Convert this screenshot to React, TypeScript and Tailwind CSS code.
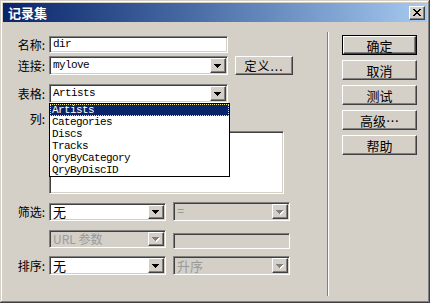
import React from "react";

const cjk = "font-['Noto_Sans_CJK_SC',sans-serif]";
const mono = "font-['Liberation_Mono',monospace]";
const sunken =
  "border border-t-[#808080] border-l-[#808080] border-b-white border-r-white shadow-[inset_1px_1px_0_#404040,inset_-1px_-1px_0_#d4d0c8]";
const raised =
  "border border-t-white border-l-white border-r-[#404040] border-b-[#404040] shadow-[inset_-1px_-1px_0_#808080,inset_1px_1px_0_#d4d0c8]";

function Arrow({ disabled }: { disabled?: boolean }) {
  const d = "M0 0h7v1H0zM1 1h5v1H1zM2 2h3v1H2zM3 3h1v1H3z";
  return (
    <svg width="8" height="5" viewBox="0 0 8 5">
      {disabled && <path d={d} fill="#ffffff" transform="translate(1 1)" />}
      <path d={d} fill={disabled ? "#808080" : "#000000"} />
    </svg>
  );
}

function Select({
  value,
  w,
  h,
  disabled,
  textCls,
  children,
}: {
  value: string;
  w: string;
  h: string;
  disabled?: boolean;
  textCls: string;
  children?: React.ReactNode;
}) {
  return (
    <div className={`relative ${w} ${h} shrink-0`}>
      <div
        className={`flex h-full w-full items-stretch p-[1px] ${sunken} ${
          disabled ? "bg-[#d4d0c8]" : "bg-white"
        }`}
      >
        <div
          className={`flex flex-1 items-center pl-[2px] leading-none ${textCls} ${
            disabled ? "text-[#9a9a9a]" : "text-black"
          }`}
        >
          {value}
        </div>
        <div
          className={`flex w-[16px] items-center justify-center bg-[#d4d0c8] pt-[1px] ${raised}`}
        >
          <Arrow disabled={disabled} />
        </div>
      </div>
      {children}
    </div>
  );
}

function Label({ text, cls = "" }: { text: string; cls?: string }) {
  return (
    <div
      className={`w-[43px] shrink-0 pr-[1px] text-right text-[12px] leading-none text-black ${cjk} ${cls}`}
    >
      {text}
    </div>
  );
}

function Btn({ text, def }: { text: string; def?: boolean }) {
  const inner = (
    <div
      className={`flex h-full w-full items-center justify-center bg-[#d4d0c8] text-[13px] leading-none text-black ${cjk} ${raised}`}
    >
      {text}
    </div>
  );
  return (
    <div
      className={`h-[20px] w-[75px] ${def ? "border border-black" : ""}`}
    >
      {inner}
    </div>
  );
}

const items = [
  "Artists",
  "Categories",
  "Discs",
  "Tracks",
  "QryByCategory",
  "QryByDiscID",
];

export default function App() {
  return (
    <div className="h-[306px] w-[432px] bg-white">
      <div className="flex h-[303px] w-[430px] flex-col bg-[#d4d0c8] p-[3px] shadow-[inset_-1px_-1px_0_#404040,inset_1px_1px_0_#d4d0c8,inset_-2px_-2px_0_#808080,inset_2px_2px_0_#ffffff]">
        {/* Title bar */}
        <div className="flex h-[19px] shrink-0 items-center justify-between bg-gradient-to-r from-[#0a246a] to-[#a6caf0] pl-[5px] pr-[2px]">
          <span
            className={`text-[13px] font-bold leading-none text-white ${cjk}`}
          >
            记录集
          </span>
          <div
            className={`flex h-[14px] w-[16px] items-center justify-center bg-[#d4d0c8] ${raised}`}
          >
            <svg width="8" height="7" viewBox="0 0 8 7">
              <path
                d="M0 0h2v1H0zM6 0h2v1H6zM1 1h2v1H1zM5 1h2v1H5zM2 2h4v1H2zM3 3h2v1H3zM2 4h4v1H2zM1 5h2v1H1zM5 5h2v1H5zM0 6h2v1H0zM6 6h2v1H6z"
                fill="#000"
              />
            </svg>
          </div>
        </div>

        {/* Body */}
        <div className="flex flex-1">
          {/* Left form */}
          <div className="flex w-[324px] shrink-0 flex-col">
            {/* name */}
            <div className="mt-[14px] flex items-center gap-[3px]">
              <Label text="名称:" />
              <div
                className={`flex h-[17px] w-[179px] items-center bg-white pl-[3px] text-[11px] tracking-[-0.6px] ${mono} ${sunken}`}
              >
                dir
              </div>
            </div>
            {/* connection */}
            <div className="mt-[3px] flex items-center gap-[3px]">
              <Label text="连接:" />
              <Select
                value="mylove"
                w="w-[179px]"
                h="h-[19px]"
                textCls={`text-[11px] tracking-[-0.6px] ${mono}`}
              />
              <div
                className={`ml-[4px] flex h-[19px] w-[58px] items-center justify-center bg-[#d4d0c8] text-[12px] leading-none tracking-[1px] text-black ${cjk} ${raised}`}
              >
                定义...
              </div>
            </div>
            {/* table */}
            <div className="relative z-10 mt-[9px] flex items-center gap-[3px]">
              <Label text="表格:" />
              <Select
                value="Artists"
                w="w-[179px]"
                h="h-[19px]"
                textCls={`text-[11px] tracking-[-0.6px] ${mono}`}
              >
                <div className="absolute left-0 top-full w-[181px] border border-black bg-white">
                  {items.map((it, i) => (
                    <div
                      key={it}
                      className={`flex h-[12px] items-center pl-[2px] text-[11px] leading-none tracking-[-0.6px] ${mono} ${
                        i === 0
                          ? "bg-[#0a246a] text-white outline-1 outline-dotted outline-[#f0e68c] -outline-offset-1"
                          : "text-black"
                      }`}
                    >
                      {it}
                    </div>
                  ))}
                </div>
              </Select>
            </div>
            {/* columns */}
            <div className="mt-[8px] flex items-start gap-[3px]">
              <Label text="列:" cls="pt-[2px]" />
              <div
                className={`mt-[20px] h-[63px] w-[235px] bg-white ${sunken}`}
              />
            </div>
            {/* filter */}
            <div className="mt-[8px] flex items-center gap-[3px]">
              <Label text="筛选:" />
              <Select
                value="无"
                w="w-[117px]"
                h="h-[18px]"
                textCls={`text-[13px] ${cjk}`}
              />
              <div className="ml-[4px]">
                <Select
                  value="="
                  w="w-[117px]"
                  h="h-[19px]"
                  disabled
                  textCls={`text-[12px] ${mono}`}
                />
              </div>
            </div>
            {/* url */}
            <div className="mt-[8px] flex items-center gap-[3px]">
              <div className="w-[43px] shrink-0" />
              <Select
                value="URL 参数"
                w="w-[117px]"
                h="h-[18px]"
                disabled
                textCls={`text-[12px] ${cjk}`}
              />
              <div
                className={`ml-[4px] mt-[4px] h-[16px] w-[117px] bg-[#d4d0c8] ${sunken}`}
              />
            </div>
            {/* sort */}
            <div className="mt-[7px] flex items-center gap-[3px]">
              <Label text="排序:" />
              <Select
                value="无"
                w="w-[117px]"
                h="h-[19px]"
                textCls={`text-[13px] ${cjk}`}
              />
              <div className="ml-[4px]">
                <Select
                  value="升序"
                  w="w-[117px]"
                  h="h-[19px]"
                  disabled
                  textCls={`text-[13px] ${cjk}`}
                />
              </div>
            </div>
          </div>

          {/* Separator */}
          <div className="mt-[10px] mb-[4px] w-[2px] shrink-0 border-l border-r border-l-[#808080] border-r-white" />

          {/* Right buttons */}
          <div className="ml-[13px] mt-[13px] flex flex-col gap-[5px]">
            <Btn text="确定" def />
            <Btn text="取消" />
            <Btn text="测试" />
            <Btn text="高级⋯" />
            <Btn text="帮助" />
          </div>
        </div>
      </div>
    </div>
  );
}
